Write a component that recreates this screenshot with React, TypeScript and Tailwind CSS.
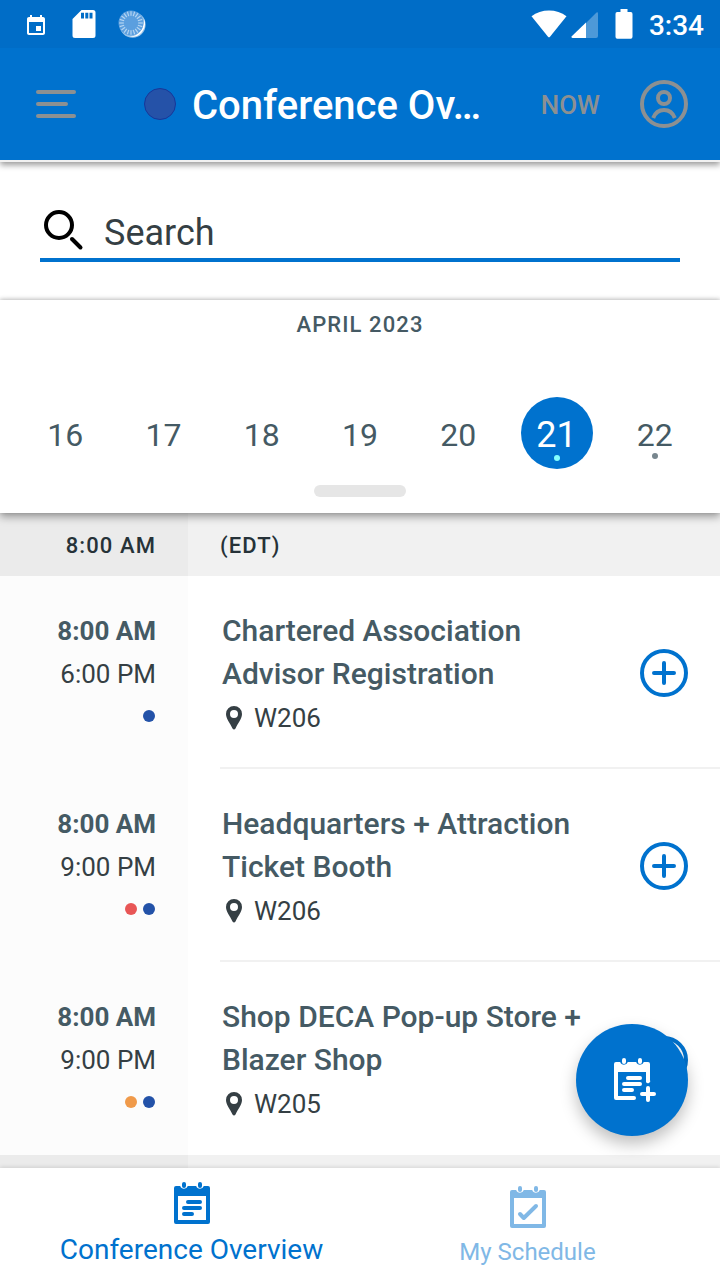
import React from "react";

type Day = { date: number; selected?: boolean; dot?: boolean };
type Session = { start: string; end: string; title: string; room: string; tags: string[] };

const days: Day[] = [
  { date: 16 },
  { date: 17 },
  { date: 18 },
  { date: 19 },
  { date: 20 },
  { date: 21, selected: true, dot: true },
  { date: 22, dot: true },
];

const sessions: Session[] = [
  { start: "8:00 AM", end: "6:00 PM", title: "Chartered Association Advisor Registration", room: "W206", tags: ["bg-[#2352a8]"] },
  { start: "8:00 AM", end: "9:00 PM", title: "Headquarters + Attraction Ticket Booth", room: "W206", tags: ["bg-[#e85656]", "bg-[#2352a8]"] },
  { start: "8:00 AM", end: "9:00 PM", title: "Shop DECA Pop-up Store + Blazer Shop", room: "W205", tags: ["bg-[#f09a4a]", "bg-[#2352a8]"] },
];

function SyncIcon() {
  const ticks = Array.from({ length: 20 }, (_, i) => i * 18);
  return (
    <svg width="28" height="28" viewBox="0 0 28 28" aria-hidden="true">
      <circle cx="14.6" cy="14.8" r="13" fill="#fff" opacity="0.6" />
      <path d="M26 9a13 13 0 0 1-15 17.500c9 .5 15-7 15-17.500z" fill="#fff" />
      <circle cx="13" cy="13" r="12.500" fill="#5b9fdf" />
      {ticks.map((a) => (
        <path key={a} d="M13 1.200v4.600" stroke="#b5d5f2" strokeWidth="1.200" transform={`rotate(${a} 13 13)`} />
      ))}
    </svg>
  );
}

function StatusBar() {
  return (
    <div className="flex h-12 items-center bg-[#006dc7] pr-4 pl-6 text-white">
      <svg className="mt-1" width="24" height="24" viewBox="0 0 24 24" fill="currentColor" aria-hidden="true">
        <path d="M17 12h-5v5h5v-5zM16 1v2H8V1H6v2H5c-1.110 0-1.990.9-1.990 2L3 19c0 1.100.89 2 2 2h14c1.100 0 2-.9 2-2V5c0-1.100-.9-2-2-2h-1V1h-2zm3 18H5V8h14v11z" />
      </svg>
      <svg className="ml-6" width="24" height="28" viewBox="0 0 24 28" fill="currentColor" aria-hidden="true">
        <path fillRule="evenodd" d="M9.500 0H21a2.500 2.500 0 0 1 2.500 2.500v23A2.500 2.500 0 0 1 21 28H3a2.500 2.500 0 0 1-2.500-2.500V9zM9 2.700v5.800h3V2.700zm4.300 0v5.800h3V2.700zm4.200 0v5.800h3V2.700z" />
      </svg>
      <span className="ml-5.5">
        <SyncIcon />
      </span>
      <div className="ml-auto flex items-center">
        <svg width="36" height="28" viewBox="0 0 36 28" fill="currentColor" aria-hidden="true">
          <path d="M.5 6.300C10-1.600 26-1.600 35.500 6.300L19 26.700q-1 1-2 0z" />
        </svg>
        <svg className="ml-1 mt-0.5" width="28" height="28" viewBox="0 0 28 28" fill="currentColor" aria-hidden="true">
          <path opacity="0.3" d="M15 12 25.500 1.500Q27 .5 27 2.500V25q0 2-2 2H15z" />
          <path d="M15 11.500V27H1.500Q-.5 26.500 1 25z" />
        </svg>
        <svg className="ml-4" width="18" height="30" viewBox="0 0 18 30" fill="currentColor" aria-hidden="true">
          <path d="M5.500 0h7v3h3A1.900 1.900 0 0 1 17.500 5v22.800a1.900 1.900 0 0 1-2 1.900h-13a1.900 1.900 0 0 1-2-1.900V5a1.900 1.900 0 0 1 2-2h3z" />
        </svg>
        <span className="ml-4 pt-1 text-[28px] leading-8 font-medium">3:34</span>
      </div>
    </div>
  );
}

function AppBar() {
  return (
    <header className="flex h-28 items-center bg-[#0072ce] pr-8 pl-9">
      <button type="button" aria-label="Open menu" className="flex w-10 shrink-0 flex-col gap-2">
        <span className="h-1 w-10 rounded-full bg-[#8c9092]" />
        <span className="h-1 w-8 rounded-full bg-[#8c9092]" />
        <span className="h-1 w-10 rounded-full bg-[#8c9092]" />
      </button>
      <span className="ml-17 size-8 shrink-0 rounded-full border border-[#16379a] bg-[#2552a8]" />
      <h1 className="ml-4 min-w-0 flex-1 truncate pt-1 text-[40px] leading-12 font-medium text-white">Conference Ov…</h1>
      <button type="button" className="ml-4 shrink-0 pt-0.5 text-[26px] leading-8 font-medium text-[#8c9092]">
        NOW
      </button>
      <button type="button" aria-label="Profile" className="ml-10 shrink-0 text-[#8c9092]">
        <svg width="48" height="48" viewBox="0 0 48 48" fill="none" stroke="currentColor" strokeWidth="4" aria-hidden="true">
          <circle cx="24" cy="24" r="22" />
          <circle cx="24" cy="18" r="6" />
          <path d="M13.200 38c2-5.300 6-8 10.800-8s8.800 2.700 10.800 8" />
        </svg>
      </button>
    </header>
  );
}

function SearchBar() {
  return (
    <div className="bg-white px-10 py-9.5">
      <label className="flex h-15.5 items-center gap-5 border-b-4 border-[#0072ce]">
        <svg className="shrink-0" width="44" height="44" viewBox="0 1 44 44" fill="none" stroke="#000" strokeWidth="4" strokeLinecap="round" aria-hidden="true">
          <circle cx="19" cy="19" r="13" />
          <path d="m32 33 8.500 8.500" />
        </svg>
        <input
          type="text"
          aria-label="Search"
          placeholder="Search"
          className="min-w-0 flex-1 bg-transparent pt-2 text-4xl text-[#37474f] outline-none placeholder:text-[#353f44] placeholder:opacity-100"
        />
      </label>
    </div>
  );
}

function Calendar() {
  return (
    <section className="relative z-10 flex flex-col items-center bg-white px-4 pt-[9px] pb-4 shadow-[0_-1px_4px_rgba(0,0,0,0.2),0_4px_8px_rgba(0,0,0,0.35)]">
      <h2 className="text-[22px] leading-8 font-medium tracking-wider text-[#455a64]">APRIL 2023</h2>
      <div className="mt-14 grid w-full grid-cols-7">
        {days.map((d) => (
          <button
            key={d.date}
            type="button"
            className={
              d.selected
                ? "relative mx-auto size-18 rounded-full bg-[#0072ce] pt-1 text-4xl text-white"
                : "relative mx-auto size-18 pt-1 text-[32px] text-[#455a64]"
            }
          >
            {d.date}
            {d.dot && (
              <span
                className={
                  d.selected
                    ? "absolute bottom-2 left-1/2 size-1.5 -translate-x-1/2 rounded-full bg-[#84ffff]"
                    : "absolute bottom-2.5 left-1/2 size-1.5 -translate-x-1/2 rounded-full bg-[#78868e]"
                }
              />
            )}
          </button>
        ))}
      </div>
      <button type="button" aria-label="Expand calendar" className="mt-4 h-3 w-23 rounded-full bg-[#e6e6e6]" />
    </section>
  );
}

function AddIcon() {
  return (
    <svg width="48" height="48" viewBox="0 0 48 48" fill="none" stroke="currentColor" strokeWidth="4" strokeLinecap="round" aria-hidden="true">
      <circle cx="24" cy="24" r="22" />
      <path d="M24 14v20M14 24h20" />
    </svg>
  );
}

function SessionRow({ session, last }: { session: Session; last: boolean }) {
  return (
    <li className="flex">
      <div className="flex w-47 shrink-0 flex-col items-end bg-[#fcfcfc] pt-[34px] pr-8 pb-[33px] text-[26px] leading-[43px]">
        <span className="font-bold text-[#455a64]">{session.start}</span>
        <span className="text-[#353f44]">{session.end}</span>
        <span className="flex h-10 items-center gap-1.5 pr-px">
          {session.tags.map((t) => (
            <span key={t} className={`size-3 rounded-full ${t}`} />
          ))}
        </span>
      </div>
      <div className={`ml-8 flex min-w-0 flex-1 items-center pr-8 ${last ? "" : "border-b-2 border-[#f1f1f1]"}`}>
        <div className="min-w-0 flex-1 self-start pt-[33px] pr-12 pl-0.5">
          <h3 className="text-3xl leading-[43px] font-medium text-[#455a64]">{session.title}</h3>
          <p className="mt-0.5 flex items-center gap-2 text-[26px] leading-[43px] text-[#353f44]">
            <svg width="24" height="28" viewBox="0 0 24 28" fill="currentColor" aria-hidden="true">
              <path fillRule="evenodd" d="M12 1a8 8 0 0 1 8 8c0 5-4 9-6.500 14.500q-1.500 2-3 0C8 18 4 14 4 9a8 8 0 0 1 8-8zm0 4a4 4 0 1 0 0 8 4 4 0 0 0 0-8z" />
            </svg>
            {session.room}
          </p>
        </div>
        <button type="button" aria-label={`Add ${session.title}`} className="mt-0.5 shrink-0 text-[#0072ce]">
          <AddIcon />
        </button>
      </div>
    </li>
  );
}

/* Shared top edge of the calendar icons: a bar with two cut-outs for the binder rings. */
const calendarTop = "M2 4h4.200a4 4 0 0 0 7.600 0h8.400a4 4 0 0 0 7.600 0H34a2 2 0 0 1 2 2";

function Rings() {
  return (
    <>
      <rect x="8" y="0" width="4" height="6" rx="2" />
      <rect x="24" y="0" width="4" height="6" rx="2" />
    </>
  );
}

function AgendaIcon() {
  return (
    <svg width="36" height="42" viewBox="0 0 36 42" fill="currentColor" aria-hidden="true">
      <Rings />
      <path fillRule="evenodd" d={`${calendarTop}v34a2 2 0 0 1-2 2H2a2 2 0 0 1-2-2V6a2 2 0 0 1 2-2zM4 14v24h28V14z`} />
      <path d="M14 20h12M10 26h16M10 32h8" stroke="currentColor" strokeWidth="4" strokeLinecap="round" />
    </svg>
  );
}

function ScheduleIcon() {
  return (
    <svg width="36" height="42" viewBox="0 0 36 42" fill="currentColor" aria-hidden="true">
      <Rings />
      <path fillRule="evenodd" d={`${calendarTop}v34a2 2 0 0 1-2 2H2a2 2 0 0 1-2-2V6a2 2 0 0 1 2-2zM4 12v26h28V12z`} />
      <path d="m10 28 3.800 4L26 20" fill="none" stroke="currentColor" strokeWidth="4" strokeLinecap="round" strokeLinejoin="round" />
    </svg>
  );
}

function AgendaAddIcon() {
  return (
    <svg width="44" height="44" viewBox="0 0 44 44" fill="currentColor" aria-hidden="true">
      <Rings />
      <path d={`${calendarTop}v16a2 2 0 0 1-4 2V14H4v24h16a2 2 0 0 1 0 4H2a2 2 0 0 1-2-2V6a2 2 0 0 1 2-2z`} />
      <path d="M14 20h12M10 26h16M10 32h8M34 30v12M28 36h12" stroke="currentColor" strokeWidth="4" strokeLinecap="round" />
    </svg>
  );
}

export default function App() {
  return (
    <div className="flex min-h-screen flex-col bg-white font-['Roboto',sans-serif]">
      <div className="relative z-20 border-b-2 border-[#f1f1f1] shadow-[0_3px_6px_rgba(0,0,0,0.4)]">
        <StatusBar />
        <AppBar />
      </div>
      <SearchBar />
      <Calendar />
      <main className="flex flex-1 flex-col">
        <div className="flex bg-[#f1f1f1] text-[22px] leading-8 font-medium tracking-wider text-[#263238]">
          <span className="w-47 shrink-0 bg-[#ebebeb] pt-[17px] pr-8 pb-3.5 text-right">8:00 AM</span>
          <span className="ml-8 pt-[17px] pb-3.5">(EDT)</span>
        </div>
        <ul>
          {sessions.map((s, i) => (
            <SessionRow key={s.title} session={s} last={i === sessions.length - 1} />
          ))}
        </ul>
        <div className="flex flex-1 bg-[#f1f1f1]">
          <div className="w-47 shrink-0 bg-[#ebebeb]" />
        </div>
      </main>
      <button
        type="button"
        aria-label="Add a session"
        className="fixed right-8 bottom-36 z-20 flex size-28 items-center justify-center rounded-full bg-[#0072ce] pl-2 text-white shadow-[0_8px_16px_rgba(0,0,0,0.25)]"
      >
        <AgendaAddIcon />
      </button>
      <nav className="sticky bottom-0 z-10 grid h-28 grid-cols-[383fr_337fr] bg-white shadow-[0_-1px_4px_rgba(0,0,0,0.12)]">
        <a href="#overview" aria-current="page" className="flex flex-col items-center pt-3.5 text-[28px] leading-9 text-[#0072ce]">
          <AgendaIcon />
          <span className="mt-2">Conference Overview</span>
        </a>
        <a href="#schedule" className="mr-12 flex flex-col items-center pt-4.5 text-2xl leading-9 text-[#80b8e6]">
          <ScheduleIcon />
          <span className="mt-1.5">My Schedule</span>
        </a>
      </nav>
    </div>
  );
}
